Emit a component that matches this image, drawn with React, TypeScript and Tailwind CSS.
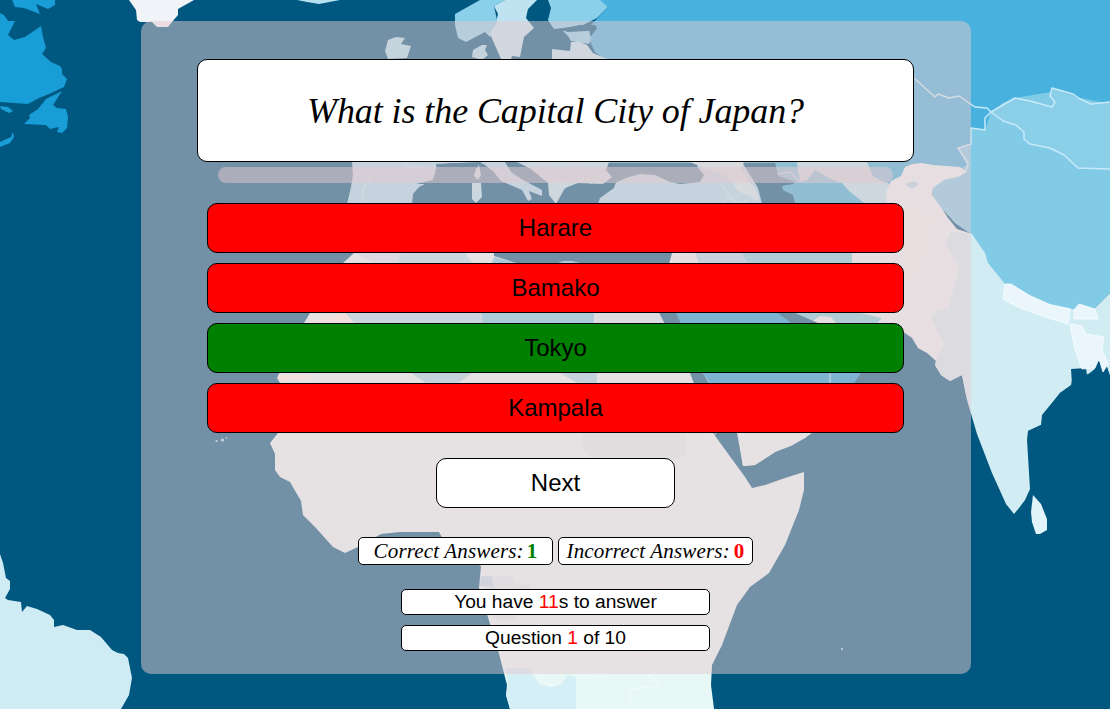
const answers = [
  { name: 'Harare', correct: false },
  { name: 'Bamako', correct: false },
  { name: 'Tokyo', correct: true },
  { name: 'Kampala', correct: false },
];

function WorldMap() {
  return (
    <svg className="absolute inset-0 h-full w-full" viewBox="0 0 1110 709" preserveAspectRatio="none" aria-hidden="true">
      <rect width="1110" height="709" fill="#005880" />
      {/* North America and the North Atlantic */}
      <g fill="#189dd6">
        <path d="M0 13L4 15 8 21 15 21 8 35 14 40 25 37 41 26 43 37 46 48 42 54 51 62 60 66 62 69 62 74 67 79 64 87 49 94 39 98 28 104 0 102Z" />
        <path d="M12 0L15 7 24 8 40 14 36 4 48 9 55 5 55 0Z" />
        <path d="M62 91L46 99 38 109 29 115 30 118 24 124 46 125 50 129 59 127 57 132 62 133 67 128 68 117 66 109 57 108 53 105Z" />
        <path d="M0 106L8 107 13 111 9 113 1 109ZM13 132L11 137 0 142V147L10 143 14 137Z" />
      </g>
      <path d="M129 0L136 10 137 20 140 22H152L157 27H168L172 22 178 15V9L194 0Z" fill="#f0f3f8" />
      <path d="M297 0L307 2 319 4 340 0Z" fill="#b5e1f1" />
      {/* Europe */}
      <path d="M480 0L455 14V25L458 38 466 42 485 32 490 37 497 20 494 6 505 0Z" fill="#8bd0ea" />
      <path d="M505 0L494 6 498 14 496 23 490 34 501 59 511 59 512 56 520 57 524 37 534 28 526 18 528 9 537 0Z" fill="#bfe3f0" />
      <path d="M548 0L551 8 548 20 554 29 563 28 583 25 597 18 608 7 602 0Z" fill="#8bd0ea" />
      <path d="M388 40L396 37 405 38 401 44 411 46 407 58 388 59 385 51ZM472 57L473 50 482 45H487L485 50 488 55 482 60Z" fill="#a7dced" />
      <path d="M600 0L608 7 590 26 597 28 589 39 595 52 608 62V163H890V190H972V163H1110V0Z" fill="#48b1de" />
      <path d="M563 31L589 29 591 39 589 44 571 41 568 36Z" fill="#8bd0ea" />
      <path d="M552 49L570 51 571 42 580 42 587 45 593 53 607 59H552Z" fill="#bce5f1" />
      <path d="M563 29L580 25 595 25 597 28 588 31 567 32Z" fill="#005880" />
      <path d="M352 162L353 175 351 187 347 204H412L413 194 419 187 433 180 437 169 436 164 480 162 493 171 501 181 522 190 528 201 532 199 529 191 542 196 542 190 523 180 511 172 505 162Z" fill="#a8dcee" />
      <path d="M437 165L452 163 484 164 491 171 499 181 494 184H416L433 180Z" fill="#005880" />
      <path d="M476 169L479 165 481 175 478 180 474 176ZM472 183L481 183 482 197 476 203 472 199Z" fill="#b5e2f0" />
      <path d="M517 162L531 169 548 183 549 195 556 204 565 188 578 183 603 184 612 177 606 170 609 162Z" fill="#b8e4ef" />
      <path d="M598 204L600 198 614 188 615 183 626 178 640 174 655 175 670 182 680 184 700 182 704 175 697 166 702 162H742L758 188 762 204Z" fill="#a8dcee" />
      <path d="M690 162L704 168 725 174 738 191 752 197 761 203 755 189 741 169 744 162Z" fill="#cfebef" />
      <path d="M775 162H910L888 203H795L793 195 783 190 782 186 793 184 795 182 778 176Z" fill="#40b2da" />
      <path d="M797 162H867L873 176 880 180 890 184 886 204H865L848 190 842 183 829 178 815 170 807 180 800 182Z" fill="#b8e4ef" />
      <path d="M572 187L583 192 593 190 600 184 616 183 613 188 603 190 596 202H579L580 195Z" fill="#005880" />
      <g fill="none" stroke="#caedf5" strokeWidth="1.5" opacity=".7">
        <path d="M402 162L410 167 428 168 435 174M353 174L367 174 370 179 364 187 362 203M540 163L549 169 556 184 560 180 566 188M568 162L582 169 592 184" />
        <path d="M707 164L727 177 746 185M721 184L733 199M735 179L750 187 755 203M778 174L790 172 800 182M724 203L727 197 733 200 740 203 749 200" />
      </g>
      {/* Central and eastern Asia */}
      <path d="M1110 104L1051 92 1015 98 991 112 985 130 971 128V144L958 148 967 165 933 185 932 198 946 213 955 223 972 235 978 268 1014 296 1050 306 1074 309 1094 309 1110 293Z" fill="#81cbe6" />
      <path d="M991 112L1003 103 1015 98 1030 101 1053 107 1055 102 1050 96 1052 88 1073 95 1083 102 1091 104 1110 102V169H1077L1064 155 1047 149 1027 144 1022 129 1003 121Z" fill="#8bcee8" />
      <g fill="none" stroke="#c7eafa" strokeWidth="1.5" strokeLinejoin="round">
        <path d="M914 78L935 97 938 94 949 98 959 96 975 107 987 108 991 112 985 118 985 130 971 128V144L958 148 968 163 966 171" />
        <path d="M1110 102L1091 104 1080 99 1073 94 1052 88 1050 96 1055 102 1052 107 1030 101 1015 98 1003 105 991 112 1003 121 1016 125 1024 132 1024 139 1030 144 1050 148 1064 155 1078 168 1110 169" />
      </g>
      {/* Southern Asia */}
      <path d="M886 203L887 190 891 181 901 176 905 167 912 164 921 163 933 165 960 167 967 172 958 177 944 180 933 188 932 195 943 210 948 218 957 229 972 234V412L966 395 962 375 950 381 941 375 935 365 936 361 927 353 918 348 912 338 905 333 836 323 842 373 835 395 812 428 805 438 775 452 755 465 743 466 737 433 703 373 677 313 662 290 672 253Z" fill="#e8f3f2" />
      <path d="M905 184L914 181 919 184 912 189Z" fill="#b2d6e3" />
      <path d="M904 213L915 208 918 217 942 215 927 229 926 250 917 272 904 280Z" fill="#edf3ee" />
      <path d="M695 253H745L755 263H699Z" fill="#add9eb" />
      <path d="M742 253H852V263L860 313 882 318 877 323 836 323 831 317 820 316 811 322 778 313Z" fill="#80cede" />
      <path d="M972 234L985 253 988 263 1005 284 1050 304 1074 309 1094 309 1110 293V376L1106 364 1096 360 1095 369 1087 375 1086 368 1071 369 1072 385 1060 393 1047 411 1041 425 1028 431 1027 440 1030 489 1025 500 1019 508 1014 514 1006 504 992 473 977 434 967 400 962 375 950 381 941 375 935 365 936 361 944 344 930 318 938 309 948 309 958 268 945 244 951 232Z" fill="#d2ecf3" />
      <path d="M1060 393L1071 385 1073 376 1090 374 1095 369 1100 362 1106 365 1110 376V431H1028L1041 425 1042 415Z" fill="#005880" />
      <path d="M944 244L959 266 948 309 938 309 930 318 944 344 929 344 923 350M951 232L938 243 944 244" fill="none" stroke="#eff8f8" strokeWidth="1.2" opacity=".7" />
      <path d="M1005 284L1011 284 1032 297 1050 305 1070 309 1068 324 1045 317 1020 308 1003 299ZM1074 310L1079 304 1095 309 1098 319 1074 319ZM1070 324L1082 326 1086 334 1104 337 1102 349 1108 364 1103 372 1099 359 1095 368 1082 369 1075 350Z" fill="#eaf5fc" stroke="#f6ffff" strokeWidth=".8" />
      <path d="M1033 495L1041 504 1047 519 1047 530 1040 534 1036 534 1032 522 1031 512Z" fill="#e1f4f9" />
      {/* Africa */}
      <path d="M354 253L343 263 310 313 304 323 277 378 281 384 278 433 270 443 275 454 275 470 280 477 290 482 301 501 303 515 316 528 333 547 345 553 358 547 381 534 400 532 439 532 444 541 468 560 481 566 479 588 498 650 507 685 506 695 510 709H714L711 685 712 665 722 645 737 605 750 587 769 573 785 545 799 510 804 490V472L785 478 765 485 752 488 745 477 713 433 690 373 659 313H545L516 263 494 253Z" fill="#e8f8f7" />
      <path d="M354 253H466L480 275 482 323 354 323 345 313 395 275Z" fill="#d6edf4" />
      <path d="M401 253H465L480 275 482 323H354L345 313 395 275Z" fill="#b4e3f1" />
      <path d="M482 313H594V373L580 373 545 335H482Z" fill="#7bcce6" />
      <path d="M494 253H667L665 263 662 313H594L572 261 545 267 516 263 494 256Z" fill="#005880" />
      <path d="M494 257L516 263 545 267V313H482V290ZM558 263L563 261 572 261 580 263Z" fill="#7bcce6" />
      <path d="M594 313H659L690 373H597Z" fill="#d2edf3" />
      <path d="M560 373H597V383H578ZM408 371H475L458 383H426Z" fill="#a7d9e8" />
      <path d="M676 313L703 373 717 395 738 433 771 420 840 397 852 386 861 373 861 356 800 323 778 313Z" fill="#189dd6" />
      <path d="M778 313H795L818 323H791Z" fill="#005880" />
      <path d="M738 433L743 466 755 465 775 452 791 446 805 438 812 433Z" fill="#e8f8f7" />
      <path d="M830 373V385" stroke="#83d4e8" strokeWidth="1.5" />
      <path d="M304 323L345 313 354 323ZM278 375H310V378L279 382Z" fill="#fff5ed" />
      <path d="M582 433H687V453L679 459H594L582 448Z" fill="#e0f3f3" />
      <path d="M481 576H512L518 586 530 583 527 604 515 618 504 622 494 619Z" fill="#dceff3" />
      <path d="M481 576L492 577 493 587 480 586Z" fill="#bddde8" />
      <g fill="none" stroke="#f7ffff" strokeWidth="1.2" opacity=".6">
        <path d="M278 465L306 465 315 466 335 470 341 490 340 512 330 517 325 505M341 490L365 488 366 458 382 448M370 483H393L401 475 414 470 424 459M381 517L382 485 411 483 412 520M443 534L440 520 455 510 476 516 493 520 506 512 506 490 495 473M506 490L540 498 568 512 579 525M590 515L606 512 618 532M687 463L718 475 750 486M690 459L718 431M618 532L644 535 650 555 620 562M644 535L663 525 665 495 644 490M750 502L775 504 787 514 761 545 730 530" />
        <path d="M507 668H535L541 682 560 687 580 675 611 678M630 709V689L660 686 640 666 640 647 619 651M565 600L595 620 615 620M650 555L660 590 695 605" />
      </g>
      <path d="M506 668L530 668 536 680 541 685 552 687 561 684 568 675 576 678V709H510L506 695 508 685Z" fill="#d4eff6" />
      {/* South America and small islands */}
      <path d="M0 554L3 563 6 578 10 581V589L5 598 8 600 21 602 22 612 27 606 37 609 50 615 54 620 54 627 63 625 77 630 90 630 101 637 112 650 118 653 124 654 128 658 132 678 129 695 121 709H0Z" fill="#cfebf4" />
      <g fill="#bde9f2"><circle cx="222.500" cy="440" r="1.500" /><circle cx="216.500" cy="441" r="1" /><circle cx="226.500" cy="438" r=".8" /><circle cx="842" cy="649" r="1" /></g>
    </svg>
  );
}

export default function App() {
  return (
    <main className="relative h-[709px] w-full overflow-hidden bg-[#005880] pt-[21px] font-['Liberation_Sans',Arial,sans-serif] text-black">
      <WorldMap />
      <section className="relative ml-[141px] flex h-[653px] w-[830px] flex-col items-center rounded-[10px] bg-[#e4cace]/50 pt-[38px]">
        <h1 className="mr-px flex h-[103px] w-[717px] items-center justify-center rounded-[10px] border border-black bg-white font-['Liberation_Serif',serif] text-[36px] leading-none font-normal tracking-[-0.09px] whitespace-nowrap italic">
          What is the Capital City of Japan?
        </h1>
        <div className="mt-[5px] mr-px h-4 w-[675px] rounded-full bg-[#e4cace]/50" />
        <div className="mt-5 mr-px flex w-[697px] flex-col gap-2.5">
          {answers.map(({ name, correct }) => (
            <button key={name} className={`h-[50px] rounded-[10px] border border-black text-2xl leading-none ${correct ? 'bg-[#008000]' : 'bg-[#ff0000]'}`}>
              {name}
            </button>
          ))}
        </div>
        <button className="mt-[25px] mr-px h-[50px] w-[239px] rounded-[10px] border border-black bg-white text-2xl leading-none">Next</button>
        <div className="mt-[29px] mr-px flex gap-[5px] font-['Liberation_Serif',serif] text-[21px] leading-none tracking-[0.16px] whitespace-nowrap italic">
          <div className="flex h-7 w-[195px] items-center justify-center gap-[3px] rounded-[5px] border border-black bg-white">
            <span>Correct Answers:</span><b className="text-[#008000] not-italic">1</b>
          </div>
          <div className="flex h-7 w-[195px] items-center justify-center gap-1 rounded-[5px] border border-black bg-white">
            <span>Incorrect Answers:</span><b className="text-[#ff0000] not-italic">0</b>
          </div>
        </div>
        <div className="mt-6 mr-px flex w-[309px] flex-col gap-2.5 text-center text-[19.2px] leading-6">
          <p className="h-[26px] rounded-[5px] border border-black bg-white">You have <span className="text-[#ff0000]">11</span>s to answer</p>
          <p className="h-[26px] rounded-[5px] border border-black bg-white">Question <span className="text-[#ff0000]">1</span> of 10</p>
        </div>
      </section>
    </main>
  );
}
